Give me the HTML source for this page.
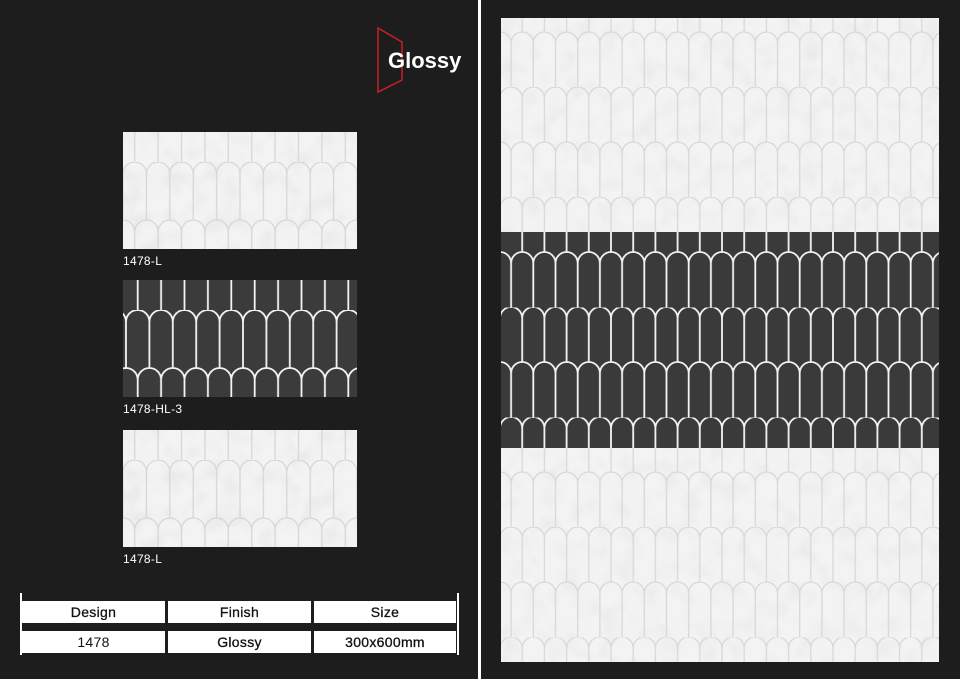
<!DOCTYPE html>
<html><head><style>
body{margin:0;width:960px;height:679px;background:#1d1d1d;position:relative;overflow:hidden;font-family:"Liberation Sans",sans-serif}
.lbl{position:absolute;color:#fff;font-size:12px;letter-spacing:.3px}
.cell{position:absolute;background:#fff;color:#111;font-size:14px;text-align:center;line-height:22px;height:22px;letter-spacing:.3px;-webkit-text-stroke:.3px #111}
</style></head><body>
<svg width="960" height="679" style="position:absolute;left:0;top:0">
<defs>
<filter id="mot" x="0" y="0" width="1" height="1"><feTurbulence type="fractalNoise" baseFrequency="0.05" numOctaves="2" seed="5"/><feColorMatrix type="matrix" values="0 0 0 0 0.5  0 0 0 0 0.5  0 0 0 0 0.5  0 0 0 -1.6 0.9"/></filter>
<pattern id="pw" x="0" y="30" width="23.4" height="116" patternUnits="userSpaceOnUse">
<path d="M0,11.7 A11.7,11.7 0 0 1 23.4,11.7 M0,11.7 V58 M23.4,11.7 V58 M-11.7,69.7 A11.7,11.7 0 0 1 11.7,69.7 M11.7,69.7 A11.7,11.7 0 0 1 35.1,69.7 M11.7,69.7 V116" fill="none" stroke="#d6d6d6" stroke-width="1.3"/></pattern>
<pattern id="pd" x="3" y="30" width="23.4" height="116" patternUnits="userSpaceOnUse">
<path d="M0,11.7 A11.7,11.7 0 0 1 23.4,11.7 M0,11.7 V58 M23.4,11.7 V58 M-11.7,69.7 A11.7,11.7 0 0 1 11.7,69.7 M11.7,69.7 A11.7,11.7 0 0 1 35.1,69.7 M11.7,69.7 V116" fill="none" stroke="#f4f4f4" stroke-width="1.8"/></pattern>
<pattern id="pbw" x="500" y="197" width="22.2" height="110" patternUnits="userSpaceOnUse">
<path d="M0,11.1 A11.1,11.1 0 0 1 22.2,11.1 M0,11.1 V55 M22.2,11.1 V55 M-11.1,66.1 A11.1,11.1 0 0 1 11.1,66.1 M11.1,66.1 A11.1,11.1 0 0 1 33.3,66.1 M11.1,66.1 V110" fill="none" stroke="#d8d8d8" stroke-width="1.3"/></pattern>
<pattern id="pbd" x="500" y="197" width="22.2" height="110" patternUnits="userSpaceOnUse">
<path d="M0,11.1 A11.1,11.1 0 0 1 22.2,11.1 M0,11.1 V55 M22.2,11.1 V55 M-11.1,66.1 A11.1,11.1 0 0 1 11.1,66.1 M11.1,66.1 A11.1,11.1 0 0 1 33.3,66.1 M11.1,66.1 V110" fill="none" stroke="#f4f4f4" stroke-width="1.8"/></pattern>
</defs>
<g transform="translate(123,132)">
<rect width="234" height="117" fill="#f3f3f3"/><rect width="234" height="117" filter="url(#mot)" opacity=".25"/>
<rect width="234" height="117" fill="url(#pw)"/></g>
<g transform="translate(123,280)">
<rect width="234" height="117" fill="#3b3b3b"/>
<rect width="234" height="117" fill="url(#pd)"/></g>
<g transform="translate(123,430)">
<rect width="234" height="117" fill="#f3f3f3"/><rect width="234" height="117" filter="url(#mot)" opacity=".25"/>
<rect width="234" height="117" fill="url(#pw)"/></g>
<rect x="501" y="18" width="438" height="644" fill="#f3f3f3"/>
<rect x="501" y="18" width="438" height="644" filter="url(#mot)" opacity=".2"/>
<rect x="501" y="18" width="438" height="644" fill="url(#pbw)"/>
<rect x="501" y="232" width="438" height="216" fill="#3a3a3a"/>
<rect x="501" y="232" width="438" height="216" fill="url(#pbd)"/>
<rect x="478" y="0" width="3" height="679" fill="#fff"/>
<path d="M378,28 L402,42 L402,80 L378,92 Z" fill="none" stroke="#c8202a" stroke-width="1.5"/>
<rect x="20" y="593" width="2" height="62" fill="#fff"/>
<rect x="457" y="593" width="2" height="62" fill="#fff"/>
</svg>
<div style="position:absolute;left:388px;top:48px;color:#fff;font-weight:bold;font-size:22px">Glossy</div>
<div class="lbl" style="left:123px;top:254px">1478-L</div>
<div class="lbl" style="left:123px;top:402px">1478-HL-3</div>
<div class="lbl" style="left:123px;top:552px">1478-L</div>
<div class="cell" style="left:22px;top:601px;width:143px">Design</div>
<div class="cell" style="left:168px;top:601px;width:143px">Finish</div>
<div class="cell" style="left:314px;top:601px;width:142px">Size</div>
<div class="cell" style="left:22px;top:631px;width:143px;-webkit-text-stroke:0">1478</div>
<div class="cell" style="left:168px;top:631px;width:143px">Glossy</div>
<div class="cell" style="left:314px;top:631px;width:142px">300x600mm</div>
</body></html>
